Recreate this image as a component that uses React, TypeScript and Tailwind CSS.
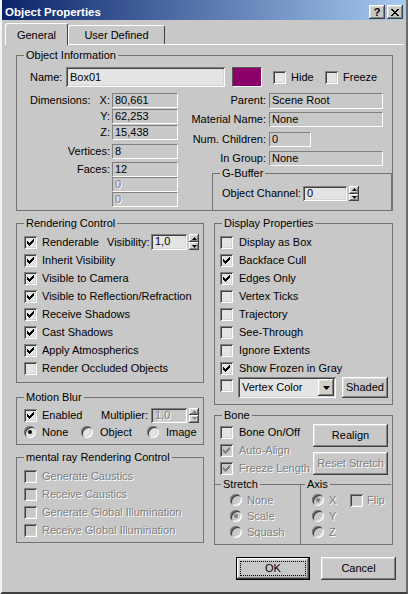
import React from 'react'

const RAISED = 'shadow-[inset_-1px_-1px_0_#404040,inset_1px_1px_0_#ffffff,inset_-2px_-2px_0_#808080,inset_2px_2px_0_#dcdcdc]'
const SUNKEN = 'shadow-[inset_1px_1px_0_#808080,inset_-1px_-1px_0_#ffffff,inset_2px_2px_0_#404040,inset_-2px_-2px_0_#d4d4d4]'
const DIS = 'text-[#808080] [text-shadow:1px_1px_0_#ffffff]'

function Group({ title, className = '', legend = 'ml-[7px]', children }: { title: string; className?: string; legend?: string; children?: React.ReactNode }) {
  return (
    <div className={`border border-[#727272] ${className}`}>
      <div className={`-mt-[7px] ${legend} w-fit px-[2px] h-[13px] leading-[13px] bg-[#c8c8c8]`}>{title}</div>
      {children}
    </div>
  )
}

const CHECK_RUNS = [
  [6, 0, 1], [5, 1, 2], [0, 2, 1], [4, 2, 3], [0, 3, 2], [3, 3, 3], [0, 4, 5], [1, 5, 3], [2, 6, 1],
]

function Check({ on = false, off = false, className = '' }: { on?: boolean; off?: boolean; className?: string }) {
  return (
    <span className={`w-[13px] h-[13px] shrink-0 flex items-center justify-center ${SUNKEN} ${off ? 'bg-[#c8c8c8]' : 'bg-[#e4e4e4]'} ${className}`}>
      {on && (
        <svg width="7" height="7" viewBox="0 0 7 7" shapeRendering="crispEdges">
          {CHECK_RUNS.map(([x, y, w], i) => (
            <rect key={i} x={x} y={y} width={w} height={1} fill={off ? '#808080' : '#000000'} />
          ))}
        </svg>
      )}
    </span>
  )
}

function Radio({ on = false, off = false, className = '' }: { on?: boolean; off?: boolean; className?: string }) {
  return (
    <span className={`w-[12px] h-[12px] shrink-0 rounded-full flex items-center justify-center ${SUNKEN} ${off ? 'bg-[#c8c8c8]' : 'bg-[#e4e4e4]'} ${className}`}>
      {on && <span className={`w-[4px] h-[4px] rounded-full ${off ? 'bg-[#808080]' : 'bg-black'}`} />}
    </span>
  )
}

function CheckRow({ label, on, off, box = 'ml-[7px]', gap = 'ml-[5px]' }: { label: string; on?: boolean; off?: boolean; box?: string; gap?: string }) {
  return (
    <div className="h-[18px] flex items-center">
      <Check on={on} off={off} className={box} />
      <span className={`${gap} whitespace-nowrap ${off ? DIS : ''}`}>{label}</span>
    </div>
  )
}

function Field({ children, className = '', off = false }: { children?: React.ReactNode; className?: string; off?: boolean }) {
  return (
    <div className={`border border-t-[#808080] border-l-[#808080] border-b-white border-r-white pl-[2px] leading-[13px] whitespace-nowrap overflow-hidden ${off ? DIS : ''} ${className}`}>
      {children}
    </div>
  )
}

function Tri({ down = false, off = false }: { down?: boolean; off?: boolean }) {
  return (
    <svg width="5" height="3" viewBox="0 0 5 3">
      <path d={down ? 'M0 0H5L2.5 3Z' : 'M2.5 0L5 3H0Z'} fill={off ? '#808080' : '#000000'} />
    </svg>
  )
}

function Spinner({ value, w, h = 'h-[16px]', off = false }: { value: string; w: string; h?: string; off?: boolean }) {
  return (
    <div className={`flex ${h}`}>
      <div className={`${w} ${SUNKEN} ${off ? 'bg-[#c8c8c8]' : 'bg-[#e4e4e4]'} pl-[4px] pt-[1px] leading-[13px] ${off ? DIS : ''}`}>{value}</div>
      <div className="ml-[2px] w-[10px] flex flex-col">
        <div className={`flex-1 flex items-center justify-center bg-[#d0d0d0] ${RAISED}`}><Tri off={off} /></div>
        <div className={`flex-1 flex items-center justify-center bg-[#d0d0d0] ${RAISED}`}><Tri down off={off} /></div>
      </div>
    </div>
  )
}

function Button({ children, className = '', off = false }: { children: React.ReactNode; className?: string; off?: boolean }) {
  return (
    <div className={`flex items-center justify-center bg-[#c8c8c8] ${RAISED} ${off ? DIS : ''} ${className}`}>{children}</div>
  )
}

function InfoRow({ label, children, className = '' }: { label: React.ReactNode; children: React.ReactNode; className?: string }) {
  return (
    <div className={`flex ${className}`}>
      <div className="w-[93px] flex justify-end items-center leading-[13px]">{label}</div>
      <div className="ml-[2px]">{children}</div>
    </div>
  )
}

function RightRow({ label, children, className = '' }: { label: string; children: React.ReactNode; className?: string }) {
  return (
    <div className={`flex ${className}`}>
      <div className="w-[90px] pr-[3px] text-right leading-[15px] whitespace-nowrap">{label}</div>
      {children}
    </div>
  )
}

function RadioRow({ label, on, off, box, gap = 'ml-[5px]', children }: { label: string; on?: boolean; off?: boolean; box: string; gap?: string; children?: React.ReactNode }) {
  return (
    <div className="h-[16px] flex items-center">
      <Radio on={on} off={off} className={box} />
      <span className={`${gap} ${off ? DIS : ''}`}>{label}</span>
      {children}
    </div>
  )
}

export default function App() {
  return (
    <div className="w-[408px] h-[594px] overflow-hidden bg-[#c8c8c8] border-l-2 border-l-[#f4f4f4] border-r-2 border-r-[#6a6a6a] border-b-2 border-b-[#404040] font-['Liberation_Sans',Arial,sans-serif] text-[11px] leading-[13px] text-black select-none">
      {/* title bar */}
      <div className="h-[20px] pt-[4px] pl-[3px] pr-[3px] flex items-center bg-[linear-gradient(to_right,#0a246a,#a6caf0)]">
        <span className="font-bold text-white text-[11.5px] flex-1">Object Properties</span>
        <Button className="w-[16px] h-[14px] font-bold text-[11px]">?</Button>
        <Button className="w-[16px] h-[14px] ml-[2px]">
          <svg width="8" height="7" viewBox="0 0 8 7" shapeRendering="crispEdges">
            <path d="M0 0h2l2 2.5L6 0h2L5 3.5 8 7H6L4 4.5 2 7H0l3-3.5z" fill="#000" />
          </svg>
        </Button>
      </div>

      {/* tabs */}
      <div className="h-[24px] flex items-end pl-[3px]">
        <div className="relative z-10 -mb-[1px] w-[63px] h-[22px] pt-[1px] flex items-center justify-center bg-[#c8c8c8] border-t border-l border-white border-r border-r-[#404040] rounded-t-[3px]">
          General
        </div>
        <div className="w-[97px] h-[19px] flex items-center justify-center border-t border-l border-white border-r border-r-[#404040] rounded-t-[3px]">
          User Defined
        </div>
      </div>

      <div className="ml-[3px] w-[399px] border-t border-white">
        {/* Object Information */}
        <Group title="Object Information" className="ml-[11px] mt-[10px] w-[377px] h-[156px]">
          <div className="mt-[5px] h-[20px] flex items-center">
            <span className="ml-[13px] w-[36px]">Name:</span>
            <div className={`w-[159px] h-[20px] ${SUNKEN} bg-[#e4e4e4] pl-[4px] pt-[4px] leading-[13px]`}>Box01</div>
            <div className="ml-[7px] w-[30px] h-[20px] bg-[#8a0068] border border-t-[#5a5a5a] border-l-[#5a5a5a] border-b-white border-r-white" />
            <Check className="ml-[11px]" />
            <span className="ml-[5px] w-[29px]">Hide</span>
            <Check className="ml-[5px]" />
            <span className="ml-[5px]">Freeze</span>
          </div>
          <div className="mt-[6px] flex">
            <div className="w-[163px]">
              <InfoRow label={<div className="w-full flex justify-between"><span className="ml-[13px]">Dimensions:</span><span>X:</span></div>}>
                <Field className="w-[66px] h-[15px]">80,661</Field>
              </InfoRow>
              <InfoRow label="Y:" className="mt-[1px]"><Field className="w-[66px] h-[15px]">62,253</Field></InfoRow>
              <InfoRow label="Z:" className="mt-[1px]"><Field className="w-[66px] h-[15px]">15,438</Field></InfoRow>
              <InfoRow label="Vertices:" className="mt-[4px]"><Field className="w-[66px] h-[15px]">8</Field></InfoRow>
              <InfoRow label="Faces:" className="mt-[3px]"><Field className="w-[66px] h-[15px]">12</Field></InfoRow>
              <InfoRow label="" className="mt-0"><Field off className="w-[66px] h-[15px]">0</Field></InfoRow>
              <InfoRow label="" className="mt-0"><Field off className="w-[66px] h-[15px]">0</Field></InfoRow>
            </div>
            <div className="flex-1">
              <RightRow label="Parent:"><Field className="w-[114px] h-[16px]">Scene Root</Field></RightRow>
              <RightRow label="Material Name:" className="mt-[3px]"><Field className="w-[114px] h-[15px]">None</Field></RightRow>
              <RightRow label="Num. Children:" className="mt-[5px]"><Field className="w-[42px] h-[15px]">0</Field></RightRow>
              <RightRow label="In Group:" className="mt-[4px]"><Field className="w-[114px] h-[15px]">None</Field></RightRow>
              <Group title="G-Buffer" className="mt-[7px] ml-[33px] w-[180px] h-[38px]">
                <div className="mt-[6px] flex items-center">
                  <span className="ml-[9px] w-[81px] whitespace-nowrap">Object Channel:</span>
                  <Spinner value="0" w="w-[44px]" h="h-[15px]" />
                </div>
              </Group>
            </div>
          </div>
        </Group>

        <div className="mt-[12px] flex items-start">
          {/* left column */}
          <div className="ml-[11px] w-[188px]">
            <Group title="Rendering Control" className="h-[160px]">
              <div className="mt-[3px]">
                <div className="h-[18px] flex items-center">
                  <Check on className="ml-[7px]" />
                  <span className="ml-[5px] w-[65px]">Renderable</span>
                  <span className="w-[44px]">Visibility:</span>
                  <Spinner value="1,0" w="w-[36px]" />
                </div>
                <CheckRow label="Inherit Visibility" on />
                <CheckRow label="Visible to Camera" on />
                <CheckRow label="Visible to Reflection/Refraction" on />
                <CheckRow label="Receive Shadows" on />
                <CheckRow label="Cast Shadows" on />
                <CheckRow label="Apply Atmospherics" on />
                <CheckRow label="Render Occluded Objects" />
              </div>
            </Group>

            <Group title="Motion Blur" className="mt-[14px] h-[48px]">
              <div className="mt-[3px] h-[16px] flex items-center">
                <Check on className="ml-[7px]" />
                <span className="ml-[5px] w-[59px]">Enabled</span>
                <span className="w-[50px]">Multiplier:</span>
                <Spinner value="1,0" w="w-[36px]" h="h-[15px]" off />
              </div>
              <div className="mt-[1px] h-[16px] flex items-center">
                <div className="ml-[7px] w-[57px] flex items-center"><Radio on /><span className="ml-[6px]">None</span></div>
                <div className="w-[66px] flex items-center"><Radio /><span className="ml-[7px]">Object</span></div>
                <div className="flex items-center"><Radio /><span className="ml-[7px]">Image</span></div>
              </div>
            </Group>

            <Group title="mental ray Rendering Control" className="mt-[12px] h-[86px]">
              <div className="mt-[3px]">
                <CheckRow label="Generate Caustics" off />
                <CheckRow label="Receive Caustics" off />
                <CheckRow label="Generate Global Illumination" off />
                <CheckRow label="Receive Global Illumination" off />
              </div>
            </Group>
          </div>

          {/* right column */}
          <div className="ml-[10px] w-[179px]">
            <Group title="Display Properties" className="h-[182px]">
              <div className="mt-[3px]">
                <CheckRow label="Display as Box" box="ml-[5px]" gap="ml-[6px]" />
                <CheckRow label="Backface Cull" on box="ml-[5px]" gap="ml-[6px]" />
                <CheckRow label="Edges Only" on box="ml-[5px]" gap="ml-[6px]" />
                <CheckRow label="Vertex Ticks" box="ml-[5px]" gap="ml-[6px]" />
                <CheckRow label="Trajectory" box="ml-[5px]" gap="ml-[6px]" />
                <CheckRow label="See-Through" box="ml-[5px]" gap="ml-[6px]" />
                <CheckRow label="Ignore Extents" box="ml-[5px]" gap="ml-[6px]" />
                <CheckRow label="Show Frozen in Gray" on box="ml-[5px]" gap="ml-[6px]" />
                <div className="h-[22px] flex items-start">
                  <Check className="ml-[5px] mt-[2px]" />
                  <div className={`ml-[5px] w-[98px] h-[21px] ${SUNKEN} bg-[#e4e4e4] flex items-center pl-[4px] pr-[2px]`}>
                    <span className="flex-1">Vertex Color</span>
                    <div className={`w-[16px] h-[17px] bg-[#d4d0c8] ${RAISED} flex items-center justify-center`}>
                      <svg width="7" height="4" viewBox="0 0 7 4"><path d="M0 0H7L3.5 4Z" fill="#000" /></svg>
                    </div>
                  </div>
                  <Button className="ml-[6px] w-[46px] h-[21px]">Shaded</Button>
                </div>
              </div>
            </Group>

            <Group title="Bone" className="mt-[10px] h-[130px]">
              <div className="mt-[1px] flex">
                <div className="w-[98px]">
                  <CheckRow label="Bone On/Off" box="ml-[5px]" gap="ml-[6px]" />
                  <CheckRow label="Auto-Align" on off box="ml-[5px]" gap="ml-[6px]" />
                  <CheckRow label="Freeze Length" on off box="ml-[5px]" gap="ml-[6px]" />
                </div>
                <div>
                  <Button className="mt-[1px] w-[75px] h-[23px]">Realign</Button>
                  <Button off className="mt-[5px] w-[75px] h-[23px]">Reset Stretch</Button>
                </div>
              </div>
              <div className="mt-[7px] h-[60px] flex">
                <div className="w-[86px] border-t border-r border-[#727272]">
                  <div className="-mt-[7px] ml-[6px] w-fit px-[2px] h-[13px] leading-[13px] bg-[#c8c8c8]">Stretch</div>
                  <div className="mt-[1px]">
                    <RadioRow label="None" off box="ml-[15px]" />
                    <RadioRow label="Scale" on off box="ml-[15px]" />
                    <RadioRow label="Squash" off box="ml-[15px]" />
                  </div>
                </div>
                <div className="w-[90px] border-t border-[#727272]">
                  <div className="-mt-[7px] ml-[4px] w-fit px-[2px] h-[13px] leading-[13px] bg-[#c8c8c8]">Axis</div>
                  <div className="mt-[1px]">
                    <div className="h-[16px] flex items-center">
                      <Radio on off className="ml-[11px]" />
                      <span className={`ml-[5px] w-[21px] ${DIS}`}>X</span>
                      <Check off />
                      <span className={`ml-[4px] ${DIS}`}>Flip</span>
                    </div>
                    <RadioRow label="Y" off box="ml-[11px]" />
                    <RadioRow label="Z" off box="ml-[11px]" />
                  </div>
                </div>
              </div>
            </Group>
          </div>
        </div>

        {/* buttons */}
        <div className="mt-[12px] flex justify-end pr-[8px]">
          <Button className="w-[74px] h-[23px] border border-black outline outline-1 outline-dotted outline-black outline-offset-[-5px]">OK</Button>
          <Button className="ml-[11px] w-[75px] h-[23px]">Cancel</Button>
        </div>
      </div>
    </div>
  )
}
